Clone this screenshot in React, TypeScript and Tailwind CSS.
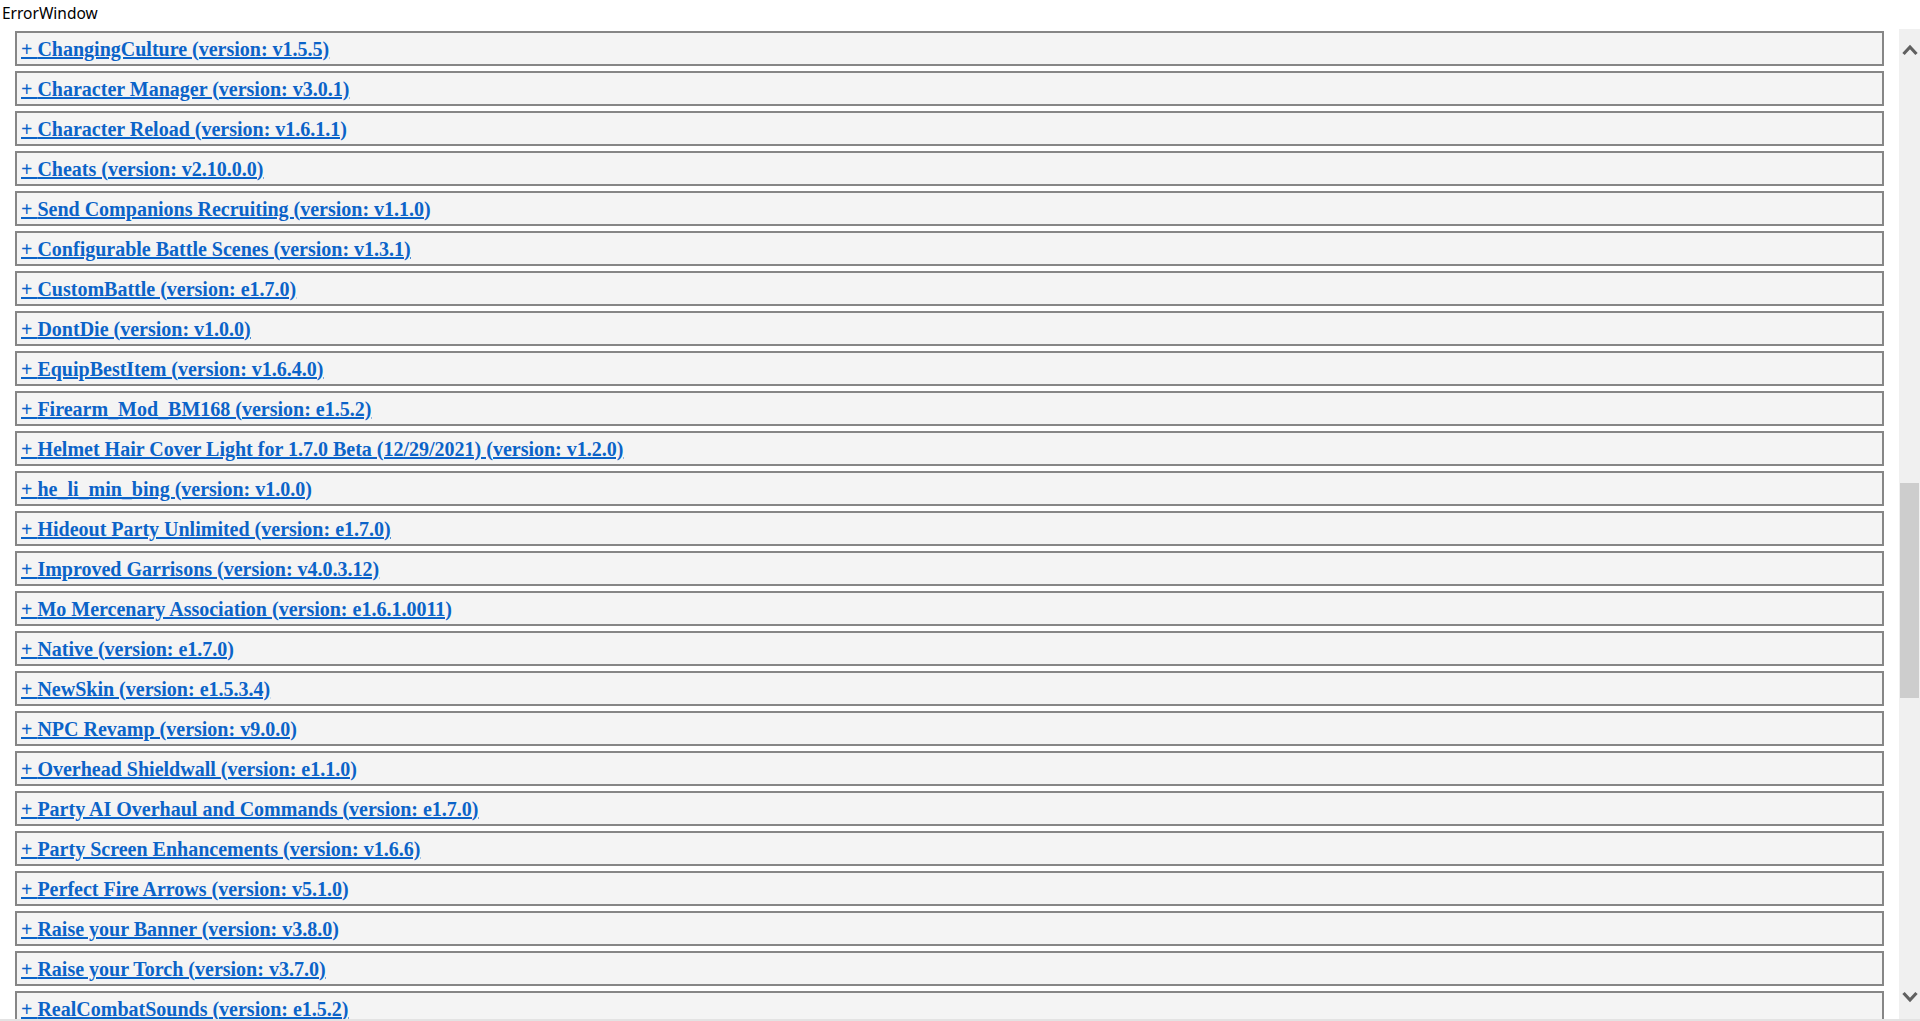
const mods = [
  "ChangingCulture (version: v1.5.5)",
  "Character Manager (version: v3.0.1)",
  "Character Reload (version: v1.6.1.1)",
  "Cheats (version: v2.10.0.0)",
  "Send Companions Recruiting (version: v1.1.0)",
  "Configurable Battle Scenes (version: v1.3.1)",
  "CustomBattle (version: e1.7.0)",
  "DontDie (version: v1.0.0)",
  "EquipBestItem (version: v1.6.4.0)",
  "Firearm_Mod_BM168 (version: e1.5.2)",
  "Helmet Hair Cover Light for 1.7.0 Beta (12/29/2021) (version: v1.2.0)",
  "he_li_min_bing (version: v1.0.0)",
  "Hideout Party Unlimited (version: e1.7.0)",
  "Improved Garrisons (version: v4.0.3.12)",
  "Mo Mercenary Association (version: e1.6.1.0011)",
  "Native (version: e1.7.0)",
  "NewSkin (version: e1.5.3.4)",
  "NPC Revamp (version: v9.0.0)",
  "Overhead Shieldwall (version: e1.1.0)",
  "Party AI Overhaul and Commands (version: e1.7.0)",
  "Party Screen Enhancements (version: v1.6.6)",
  "Perfect Fire Arrows (version: v5.1.0)",
  "Raise your Banner (version: v3.8.0)",
  "Raise your Torch (version: v3.7.0)",
  "RealCombatSounds (version: e1.5.2)",
];

function Chevron({ up }: { up: boolean }) {
  return (
    <svg width="16" height="12" viewBox="0 0 16 12">
      <polyline
        points={up ? "1.5,10 8,3 14.5,10" : "1.5,2 8,9 14.5,2"}
        fill="none"
        stroke="#606060"
        strokeWidth="3.2"
      />
    </svg>
  );
}

export default function App() {
  return (
    <div className="w-[1920px] h-[1021px] bg-white flex flex-col overflow-hidden">
      {/* title */}
      <div className="h-[29px] pl-[2px] pt-[3px] text-[15.5px] leading-[21px] text-black font-['Noto_Sans',sans-serif]">
        ErrorWindow
      </div>

      <div className="flex h-[990px]">
        {/* mod list */}
        <div className="flex-1 overflow-hidden px-[15px] pt-[2px] flex flex-col gap-[5px]">
          {mods.map((m) => (
            <div
              key={m}
              className="shrink-0 h-[35px] border-2 border-[#868686] bg-[#f4f4f4] pl-[4px] flex items-center"
            >
              <a
                href="#"
                className="text-[20px] font-bold text-[#0b63c8] underline font-['Liberation_Serif',serif] leading-none"
              >
                + {m}
              </a>
            </div>
          ))}
        </div>

        {/* scrollbar */}
        <div className="w-[21px] bg-[#f0f0f0] flex flex-col items-center">
          <div className="h-[34px] flex items-end justify-center pb-[7px]">
            <Chevron up />
          </div>
          <div className="flex-1 w-full px-[1px]">
            <div className="mt-[420px] h-[215px] bg-[#cdcdcd]" />
          </div>
          <div className="h-[34px] flex items-start justify-center pt-[6px]">
            <Chevron up={false} />
          </div>
        </div>
      </div>
      <div className="h-[2px] bg-[#e3e3e3]" />
    </div>
  );
}
